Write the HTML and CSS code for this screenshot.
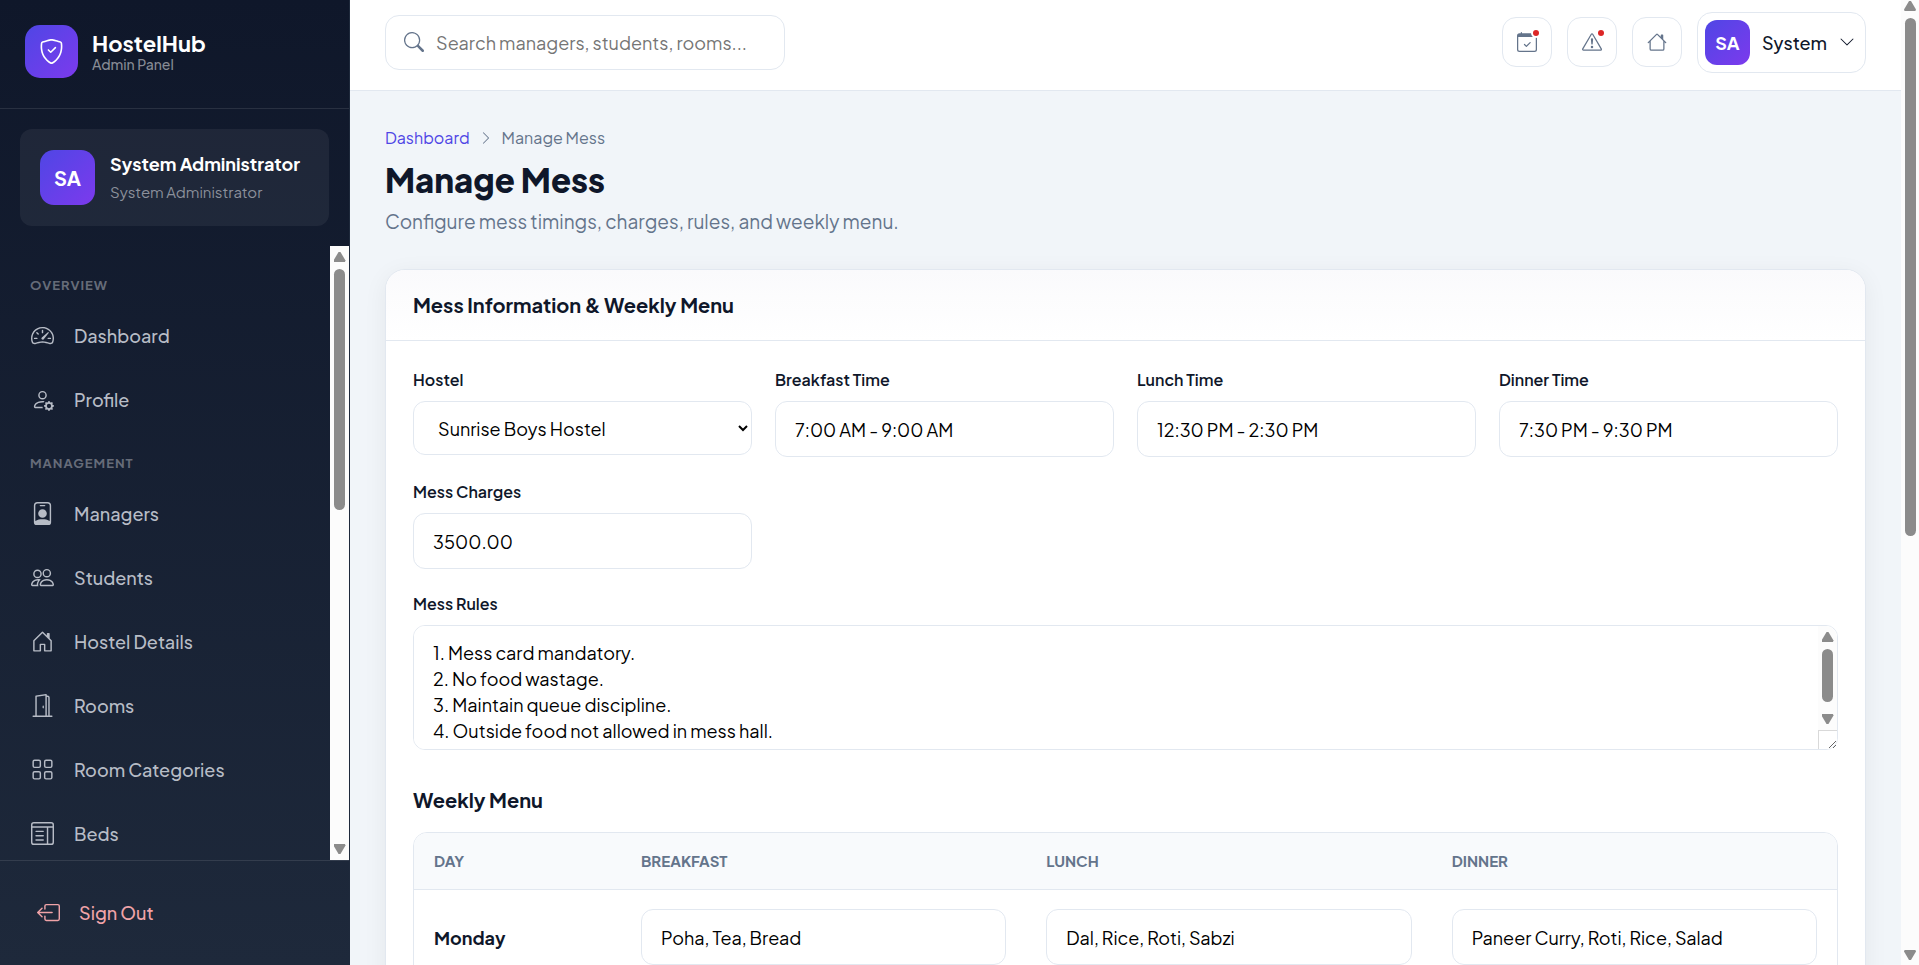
FILE: index.html
```html
<!DOCTYPE html>
<html lang="en">
<head>
  <meta charset="UTF-8">
  <meta name="viewport" content="width=device-width, initial-scale=1.0">
  <title>Manage Mess - HostelHub</title>
  <link rel="stylesheet" href="styles.css">
</head>
<body>
<div class="layout">

  <aside class="sidebar">
    <div class="brand">
      <div class="brand-logo">
        <svg class="icon" viewBox="0 0 16 16"><path d="M5.338 1.59a61 61 0 0 0-2.837.856.48.48 0 0 0-.328.39c-.554 4.157.726 7.19 2.253 9.188a10.7 10.7 0 0 0 2.287 2.233c.346.244.652.42.893.533q.18.085.293.118a1 1 0 0 0 .101.025 1 1 0 0 0 .1-.025q.114-.034.294-.118c.24-.113.547-.29.893-.533a10.7 10.7 0 0 0 2.287-2.233c1.527-1.997 2.807-5.031 2.253-9.188a.48.48 0 0 0-.328-.39c-.651-.213-1.75-.56-2.837-.855C9.552 1.29 8.531 1.067 8 1.067c-.53 0-1.552.223-2.662.524zM5.072.56C6.157.265 7.31 0 8 0s1.843.265 2.928.56c1.11.3 2.229.655 2.887.87a1.54 1.54 0 0 1 1.044 1.262c.596 4.477-.787 7.795-2.465 9.99a11.8 11.8 0 0 1-2.517 2.453 7 7 0 0 1-1.048.625c-.28.132-.581.24-.829.24s-.548-.108-.829-.24a7 7 0 0 1-1.048-.625 11.8 11.8 0 0 1-2.517-2.453C1.928 10.487.545 7.169 1.141 2.692A1.54 1.54 0 0 1 2.185 1.43 63 63 0 0 1 5.072.56"/><path d="M10.854 5.146a.5.5 0 0 1 0 .708l-3 3a.5.5 0 0 1-.708 0l-1.5-1.5a.5.5 0 1 1 .708-.708L7.5 7.793l2.646-2.647a.5.5 0 0 1 .708 0"/></svg>
      </div>
      <div class="brand-text">
        <strong>HostelHub</strong>
        <span>Admin Panel</span>
      </div>
    </div>

    <div class="user-card">
      <div class="avatar avatar-lg">SA</div>
      <div class="user-text">
        <strong>System Administrator</strong>
        <span>System Administrator</span>
      </div>
    </div>

    <div class="nav-wrap">
      <nav class="nav">
        <div class="nav-label">Overview</div>
        <a class="nav-link" href="#">
          <svg class="icon" viewBox="0 0 16 16"><path d="M8 4a.5.5 0 0 1 .5.5V6a.5.5 0 0 1-1 0V4.5A.5.5 0 0 1 8 4M3.732 5.732a.5.5 0 0 1 .707 0l.915.914a.5.5 0 1 1-.708.708l-.914-.915a.5.5 0 0 1 0-.707M2 10a.5.5 0 0 1 .5-.5h1.586a.5.5 0 0 1 0 1H2.5A.5.5 0 0 1 2 10m9.5 0a.5.5 0 0 1 .5-.5h1.5a.5.5 0 0 1 0 1H12a.5.5 0 0 1-.5-.5m.754-4.246a.39.39 0 0 0-.527-.02L7.547 9.31a.91.91 0 1 0 1.302 1.258l3.434-4.297a.39.39 0 0 0-.029-.518z"/><path fill-rule="evenodd" d="M0 10a8 8 0 1 1 15.547 2.661c-.442 1.253-1.845 1.602-2.932 1.25C11.309 13.488 9.475 13 8 13c-1.474 0-3.31.488-4.615.911-1.087.352-2.49.003-2.932-1.25A8 8 0 0 1 0 10m8-7a7 7 0 0 0-6.603 9.329c.203.575.923.876 1.68.63C4.397 12.533 6.358 12 8 12s3.604.532 4.923.96c.757.245 1.477-.056 1.68-.631A7 7 0 0 0 8 3"/></svg>
          Dashboard
        </a>
        <a class="nav-link" href="#">
          <svg class="icon" viewBox="0 0 16 16"><path d="M11 5a3 3 0 1 1-6 0 3 3 0 0 1 6 0M8 7a2 2 0 1 0 0-4 2 2 0 0 0 0 4m.256 7a4.5 4.5 0 0 1-.229-1.004H3c.001-.246.154-.986.832-1.664C4.484 10.68 5.711 10 8 10q.39 0 .74.025c.226-.341.496-.65.804-.918Q8.844 9.002 8 9c-5 0-6 3-6 4s1 1 1 1zm3.63-4.54c.18-.613 1.048-.613 1.229 0l.043.148a.64.64 0 0 0 .921.382l.136-.074c.561-.306 1.175.308.87.869l-.075.136a.64.64 0 0 0 .382.92l.149.045c.612.18.612 1.048 0 1.229l-.15.043a.64.64 0 0 0-.38.921l.074.136c.305.561-.309 1.175-.87.87l-.136-.075a.64.64 0 0 0-.92.382l-.045.149c-.18.612-1.048.612-1.229 0l-.043-.15a.64.64 0 0 0-.921-.38l-.136.074c-.561.305-1.175-.309-.87-.87l.075-.136a.64.64 0 0 0-.382-.92l-.148-.045c-.613-.18-.613-1.048 0-1.229l.148-.043a.64.64 0 0 0 .382-.921l-.074-.136c-.306-.561.308-1.175.869-.87l.136.075a.64.64 0 0 0 .92-.382zM14 12.5a1.5 1.5 0 1 0-3 0 1.5 1.5 0 0 0 3 0"/></svg>
          Profile
        </a>
        <div class="nav-label">Management</div>
        <a class="nav-link" href="#">
          <svg class="icon" viewBox="0 0 16 16"><path d="M6.5 2a.5.5 0 0 0 0 1h3a.5.5 0 0 0 0-1zM11 8a3 3 0 1 1-6 0 3 3 0 0 1 6 0"/><path d="M4.5 0A2.5 2.5 0 0 0 2 2.5V14a2 2 0 0 0 2 2h8a2 2 0 0 0 2-2V2.5A2.5 2.5 0 0 0 11.5 0zM3 2.5A1.5 1.5 0 0 1 4.5 1h7A1.5 1.5 0 0 1 13 2.5v10.795a4.2 4.2 0 0 0-.776-.492C11.392 12.387 10.063 12 8 12s-3.392.387-4.224.803a4.2 4.2 0 0 0-.776.492z"/></svg>
          Managers
        </a>
        <a class="nav-link" href="#">
          <svg class="icon" viewBox="0 0 16 16"><path d="M15 14s1 0 1-1-1-4-5-4-5 3-5 4 1 1 1 1zm-7.978-1L7 12.996c.001-.264.167-1.03.76-1.72C8.312 10.629 9.282 10 11 10c1.717 0 2.687.63 3.24 1.276.593.69.758 1.457.76 1.72l-.008.002-.014.002zM11 7a2 2 0 1 0 0-4 2 2 0 0 0 0 4m3-2a3 3 0 1 1-6 0 3 3 0 0 1 6 0M6.936 9.28a6 6 0 0 0-1.23-.247A7 7 0 0 0 5 9c-4 0-5 3-5 4q0 1 1 1h4.216A2.24 2.24 0 0 1 5 13c0-1.01.377-2.042 1.09-2.904.243-.294.526-.569.846-.816M4.92 10A5.5 5.5 0 0 0 4 13H1c0-.26.164-1.03.76-1.724.545-.636 1.492-1.256 3.16-1.275ZM1.5 5.5a3 3 0 1 1 6 0 3 3 0 0 1-6 0m3-2a2 2 0 1 0 0 4 2 2 0 0 0 0-4"/></svg>
          Students
        </a>
        <a class="nav-link" href="#">
          <svg class="icon" viewBox="0 0 16 16"><path d="M8.354 1.146a.5.5 0 0 0-.708 0l-6 6A.5.5 0 0 0 1.5 7.5v7a.5.5 0 0 0 .5.5h4.5a.5.5 0 0 0 .5-.5v-4h2v4a.5.5 0 0 0 .5.5H14a.5.5 0 0 0 .5-.5v-7a.5.5 0 0 0-.146-.354L13 5.793V2.5a.5.5 0 0 0-.5-.5h-1a.5.5 0 0 0-.5.5v1.293zM2.5 14V7.707l5.5-5.5 5.5 5.5V14H10v-4a.5.5 0 0 0-.5-.5h-3a.5.5 0 0 0-.5.5v4z"/></svg>
          Hostel Details
        </a>
        <a class="nav-link" href="#">
          <svg class="icon" viewBox="0 0 16 16"><path d="M8.5 10c-.276 0-.5-.448-.5-1s.224-1 .5-1 .5.448.5 1-.224 1-.5 1"/><path d="M10.828.122A.5.5 0 0 1 11 .5V1h.5A1.5 1.5 0 0 1 13 2.5V15h1.5a.5.5 0 0 1 0 1h-13a.5.5 0 0 1 0-1H3V1.5a.5.5 0 0 1 .43-.495l7-1a.5.5 0 0 1 .398.117M11.5 2H11v13h1V2.5a.5.5 0 0 0-.5-.5M4 1.934V15h6V1.077z"/></svg>
          Rooms
        </a>
        <a class="nav-link" href="#">
          <svg class="icon" viewBox="0 0 16 16"><path d="M1 2.5A1.5 1.5 0 0 1 2.5 1h3A1.5 1.5 0 0 1 7 2.5v3A1.5 1.5 0 0 1 5.5 7h-3A1.5 1.5 0 0 1 1 5.5zM2.5 2a.5.5 0 0 0-.5.5v3a.5.5 0 0 0 .5.5h3a.5.5 0 0 0 .5-.5v-3a.5.5 0 0 0-.5-.5zm6.5.5A1.5 1.5 0 0 1 10.5 1h3A1.5 1.5 0 0 1 15 2.5v3A1.5 1.5 0 0 1 13.5 7h-3A1.5 1.5 0 0 1 9 5.5zm1.5-.5a.5.5 0 0 0-.5.5v3a.5.5 0 0 0 .5.5h3a.5.5 0 0 0 .5-.5v-3a.5.5 0 0 0-.5-.5zM1 10.5A1.5 1.5 0 0 1 2.5 9h3A1.5 1.5 0 0 1 7 10.5v3A1.5 1.5 0 0 1 5.5 15h-3A1.5 1.5 0 0 1 1 13.5zm1.5-.5a.5.5 0 0 0-.5.5v3a.5.5 0 0 0 .5.5h3a.5.5 0 0 0 .5-.5v-3a.5.5 0 0 0-.5-.5zm6.5.5A1.5 1.5 0 0 1 10.5 9h3a1.5 1.5 0 0 1 1.5 1.5v3a1.5 1.5 0 0 1-1.5 1.5h-3A1.5 1.5 0 0 1 9 13.5zm1.5-.5a.5.5 0 0 0-.5.5v3a.5.5 0 0 0 .5.5h3a.5.5 0 0 0 .5-.5v-3a.5.5 0 0 0-.5-.5z"/></svg>
          Room Categories
        </a>
        <a class="nav-link" href="#">
          <svg class="icon" viewBox="0 0 16 16"><path d="M3 6.5a.5.5 0 0 1 .5-.5h5a.5.5 0 0 1 0 1h-5a.5.5 0 0 1-.5-.5m0 3a.5.5 0 0 1 .5-.5h5a.5.5 0 0 1 0 1h-5a.5.5 0 0 1-.5-.5m.5 2.500a.5.5 0 0 0 0 1h5a.5.5 0 0 0 0-1z"/><path d="M2 0a2 2 0 0 0-2 2v12a2 2 0 0 0 2 2h12a2 2 0 0 0 2-2V2a2 2 0 0 0-2-2zm12 1a1 1 0 0 1 1 1v1H1V2a1 1 0 0 1 1-1zm1 3v10a1 1 0 0 1-1 1h-2V4zm-4 0v11H2a1 1 0 0 1-1-1V4z"/></svg>
          Beds
        </a>
      </nav>
      <div class="scrollbar nav-scrollbar" aria-hidden="true">
        <span class="arrow-up"></span>
        <span class="thumb"></span>
        <span class="arrow-down"></span>
      </div>
    </div>

    <div class="sidebar-footer">
      <a class="signout" href="#">
        <svg class="icon" viewBox="0 0 16 16"><path fill-rule="evenodd" d="M6 12.5a.5.5 0 0 0 .5.5h8a.5.5 0 0 0 .5-.5v-9a.5.5 0 0 0-.5-.5h-8a.5.5 0 0 0-.5.5v2a.5.5 0 0 1-1 0v-2A1.5 1.5 0 0 1 6.5 2h8A1.5 1.5 0 0 1 16 3.5v9a1.5 1.5 0 0 1-1.5 1.5h-8A1.5 1.5 0 0 1 5 12.5v-2a.5.5 0 0 1 1 0z"/><path fill-rule="evenodd" d="M.146 8.354a.5.5 0 0 1 0-.708l3-3a.5.5 0 1 1 .708.708L1.707 7.5H10.5a.5.5 0 0 1 0 1H1.707l2.147 2.146a.5.5 0 0 1-.708.708z"/></svg>
        Sign Out
      </a>
    </div>
  </aside>

  <div class="main">
    <header class="topbar">
      <label class="search">
        <svg class="icon" viewBox="0 0 16 16"><path d="M11.742 10.344a6.5 6.5 0 1 0-1.397 1.398h-.001q.044.06.098.115l3.85 3.85a1 1 0 0 0 1.415-1.414l-3.85-3.85a1 1 0 0 0-.115-.1zM12 6.5a5.5 5.5 0 1 1-11 0 5.5 5.5 0 0 1 11 0"/></svg>
        <input type="search" placeholder="Search managers, students, rooms..." aria-label="Search">
      </label>
      <div class="topbar-actions">
        <button class="icon-btn" type="button" aria-label="Bookings">
          <svg class="icon" viewBox="0 0 16 16"><path d="M10.854 8.146a.5.5 0 0 1 0 .708l-3 3a.5.5 0 0 1-.708 0l-1.5-1.5a.5.5 0 0 1 .708-.708L7.5 10.793l2.646-2.647a.5.5 0 0 1 .708 0"/><path d="M3.5 0a.5.5 0 0 1 .5.5V1h8V.5a.5.5 0 0 1 1 0V1h1a2 2 0 0 1 2 2v11a2 2 0 0 1-2 2H2a2 2 0 0 1-2-2V3a2 2 0 0 1 2-2h1V.5a.5.5 0 0 1 .5-.5M1 4v10a1 1 0 0 0 1 1h12a1 1 0 0 0 1-1V4z"/></svg>
          <span class="dot"></span>
        </button>
        <button class="icon-btn" type="button" aria-label="Complaints">
          <svg class="icon" viewBox="0 0 16 16"><path d="M7.938 2.016A.13.13 0 0 1 8.002 2a.13.13 0 0 1 .063.016.15.15 0 0 1 .054.057l6.857 11.667c.036.06.035.124.002.183a.2.2 0 0 1-.054.06.1.1 0 0 1-.066.017H1.146a.1.1 0 0 1-.066-.017.2.2 0 0 1-.054-.06.18.18 0 0 1 .002-.183L7.884 2.073a.15.15 0 0 1 .054-.057m1.044-.45a1.13 1.13 0 0 0-1.96 0L.165 13.233c-.457.778.091 1.767.98 1.767h13.713c.889 0 1.438-.99.98-1.767z"/><path d="M7.002 12a1 1 0 1 1 2 0 1 1 0 0 1-2 0M7.1 5.995a.905.905 0 1 1 1.8 0l-.35 3.507a.552.552 0 0 1-1.1 0z"/></svg>
          <span class="dot"></span>
        </button>
        <button class="icon-btn" type="button" aria-label="Home">
          <svg class="icon" viewBox="0 0 16 16"><path d="M8.707 1.5a1 1 0 0 0-1.414 0L.646 8.146a.5.5 0 0 0 .708.708L2 8.207V13.5A1.5 1.5 0 0 0 3.5 15h9a1.5 1.5 0 0 0 1.5-1.5V8.207l.646.647a.5.5 0 0 0 .708-.708L13 5.793V2.5a.5.5 0 0 0-.5-.5h-1a.5.5 0 0 0-.5.5v1.293zM13 7.207V13.5a.5.5 0 0 1-.5.5h-9a.5.5 0 0 1-.5-.5V7.207l5-5z"/></svg>
        </button>
        <button class="user-menu" type="button">
          <span class="avatar">SA</span>
          System
          <svg class="icon" viewBox="0 0 16 16"><path fill-rule="evenodd" d="M1.646 4.646a.5.5 0 0 1 .708 0L8 10.293l5.646-5.647a.5.5 0 0 1 .708.708l-6 6a.5.5 0 0 1-.708 0l-6-6a.5.5 0 0 1 0-.708"/></svg>
        </button>
      </div>
    </header>

    <main class="content">
      <nav class="breadcrumb">
        <a href="#">Dashboard</a>
        <svg class="icon" viewBox="0 0 16 16"><path fill-rule="evenodd" d="M4.646 1.646a.5.5 0 0 1 .708 0l6 6a.5.5 0 0 1 0 .708l-6 6a.5.5 0 0 1-.708-.708L10.293 8 4.646 2.354a.5.5 0 0 1 0-.708"/></svg>
        <span>Manage Mess</span>
      </nav>
      <h1>Manage Mess</h1>
      <p class="subtitle">Configure mess timings, charges, rules, and weekly menu.</p>

      <section class="card">
        <div class="card-header">
          <h2>Mess Information &amp; Weekly Menu</h2>
        </div>
        <form class="card-body">
          <div class="form-grid">
            <div class="field">
              <label for="hostel">Hostel</label>
              <select id="hostel" class="control">
                <option>Sunrise Boys Hostel</option>
              </select>
            </div>
            <div class="field">
              <label for="breakfast">Breakfast Time</label>
              <input id="breakfast" class="control" type="text" value="7:00 AM - 9:00 AM">
            </div>
            <div class="field">
              <label for="lunch">Lunch Time</label>
              <input id="lunch" class="control" type="text" value="12:30 PM - 2:30 PM">
            </div>
            <div class="field">
              <label for="dinner">Dinner Time</label>
              <input id="dinner" class="control" type="text" value="7:30 PM - 9:30 PM">
            </div>
            <div class="field">
              <label for="charges">Mess Charges</label>
              <input id="charges" class="control" type="text" value="3500.00">
            </div>
            <div class="field field-full">
              <label for="rules">Mess Rules</label>
              <div class="textarea-wrap">
                <textarea id="rules" class="control" rows="4">1. Mess card mandatory.
2. No food wastage.
3. Maintain queue discipline.
4. Outside food not allowed in mess hall.</textarea>
                <div class="scrollbar textarea-scrollbar" aria-hidden="true">
                  <span class="arrow-up"></span>
                  <span class="thumb"></span>
                  <span class="arrow-down"></span>
                </div>
                <span class="resize-corner"></span>
              </div>
            </div>
          </div>

          <h3>Weekly Menu</h3>
          <div class="table-wrap">
            <table class="menu-table">
              <thead>
                <tr><th class="col-day">Day</th><th>Breakfast</th><th>Lunch</th><th>Dinner</th></tr>
              </thead>
              <tbody>
                <tr>
                  <td class="day">Monday</td>
                  <td><input class="control" type="text" aria-label="Monday breakfast" value="Poha, Tea, Bread"></td>
                  <td><input class="control" type="text" aria-label="Monday lunch" value="Dal, Rice, Roti, Sabzi"></td>
                  <td><input class="control" type="text" aria-label="Monday dinner" value="Paneer Curry, Roti, Rice, Salad"></td>
                </tr>
              </tbody>
            </table>
          </div>
        </form>
      </section>
    </main>
  </div>

  <div class="scrollbar page-scrollbar" aria-hidden="true">
    <span class="arrow-up"></span>
    <span class="thumb"></span>
    <span class="arrow-down"></span>
  </div>

</div>
</body>
</html>
```
FILE: styles.css
```css
* {
  box-sizing: border-box;
}

body {
  margin: 0;
  background: #f1f5f9;
  color: #0f172a;
  font-family: "Plus Jakarta Sans", Inter, sans-serif;
  font-size: 18px;
}

input, select, textarea, button {
  font-family: inherit;
  font-size: inherit;
}

h1, h2, h3, p {
  margin: 0;
}

a {
  text-decoration: none;
}

.icon {
  width: 20px;
  height: 20px;
  fill: currentColor;
  flex-shrink: 0;
}

.layout {
  display: flex;
  align-items: flex-start;
}

/* scrollbars */
.scrollbar {
  display: flex;
  flex-direction: column;
  align-items: center;
  gap: 7px;
  width: 19px;
  padding: 6px 0;
  flex-shrink: 0;
  background: #fcfcfc;
}
.arrow-up,
.arrow-down {
  width: 12px;
  height: 10px;
  flex-shrink: 0;
  background: #8b8b8b;
}
.arrow-up {
  clip-path: polygon(42% 0, 58% 0, 100% 85%, 95% 100%, 5% 100%, 0 85%);
}
.arrow-down {
  margin-top: auto;
  clip-path: polygon(5% 0, 95% 0, 100% 15%, 58% 100%, 42% 100%, 0 15%);
}
.thumb {
  width: 11px;
  border-radius: 6px;
  background: #8b8b8b;
}
.nav-scrollbar .thumb {
  height: 40%;
}
.page-scrollbar {
  position: sticky;
  top: 0;
  height: 100vh;
  width: 18px;
  padding: 1px 0 5px;
}
.page-scrollbar .thumb {
  height: 54%;
}
.textarea-scrollbar {
  position: absolute;
  top: 1px;
  right: 1px;
  bottom: 20px;
  border-top-right-radius: 12px;
}
.textarea-scrollbar .thumb {
  height: 58%;
}

/* sidebar */
.sidebar {
  position: sticky;
  top: 0;
  display: flex;
  flex-direction: column;
  width: 350px;
  height: 100vh;
  flex-shrink: 0;
  background: linear-gradient(180deg, #0f172a 0%, #1e293b 100%);
  border-right: 1px solid #1e293b;
  color: #fff;
}

.brand {
  display: flex;
  align-items: center;
  gap: 14px;
  padding: 25px 25px 30px;
  border-bottom: 1px solid rgba(255, 255, 255, 0.1);
}

.brand-logo {
  display: flex;
  align-items: center;
  justify-content: center;
  width: 53px;
  height: 53px;
  border-radius: 15px;
  background: linear-gradient(135deg, #4f46e5, #7c3aed);
}
.brand-logo .icon {
  width: 25px;
  height: 25px;
}

.brand-text,
.user-text {
  display: flex;
  flex-direction: column;
}
.brand-text strong {
  font-size: 22px;
  line-height: 24px;
}
.brand-text span {
  color: #878b95;
  font-size: 14px;
  font-weight: 500;
  line-height: 18px;
}

.user-card {
  display: flex;
  align-items: center;
  gap: 15px;
  margin: 20px;
  padding: 20px;
  border-radius: 12px;
  background: rgba(255, 255, 255, 0.06);
}
.user-text strong {
  font-size: 18px;
  line-height: 29px;
}
.user-text span {
  color: #8b909b;
  font-size: 15px;
  line-height: 28px;
}

.avatar {
  display: flex;
  align-items: center;
  justify-content: center;
  width: 45px;
  height: 45px;
  border-radius: 12px;
  background: linear-gradient(135deg, #4f46e5, #7c3aed);
  color: #fff;
  font-size: 18px;
  font-weight: 700;
}
.avatar-lg {
  width: 55px;
  height: 55px;
  border-radius: 14px;
  font-size: 20px;
}

.nav-wrap {
  display: flex;
  flex: 1;
  min-height: 0;
}
.nav {
  flex: 1;
  overflow: hidden;
  padding: 10px 15px 0;
}
.nav-label {
  padding: 20px 15px 12px;
  color: #666c79;
  font-size: 13px;
  font-weight: 700;
  letter-spacing: 1px;
  line-height: 18px;
  text-transform: uppercase;
}
.nav-link {
  display: flex;
  align-items: center;
  gap: 20px;
  height: 59px;
  margin-bottom: 5px;
  padding: 0 16px;
  color: #b7bcc6;
  font-size: 18px;
  font-weight: 500;
}
.nav-link .icon,
.signout .icon {
  width: 23px;
  height: 23px;
}

.sidebar-footer {
  padding: 20px 20px 22px;
  border-top: 1px solid rgba(255, 255, 255, 0.1);
}
.signout {
  display: flex;
  align-items: center;
  gap: 19px;
  height: 62px;
  padding: 0 17px;
  color: #f0a3a8;
  font-weight: 500;
}

/* top bar */
.main {
  flex: 1;
  min-width: 0;
}
.topbar {
  display: flex;
  align-items: center;
  justify-content: space-between;
  height: 91px;
  padding: 0 35px 6px;
  border-bottom: 1px solid #e2e8f0;
  background: #fff;
}
.search {
  display: flex;
  align-items: center;
  gap: 12px;
  width: 400px;
  height: 55px;
  padding: 0 18px;
  border: 1px solid #e2e8f0;
  border-radius: 14px;
  color: #64748b;
}
.search input {
  flex: 1;
  min-width: 0;
  padding: 0;
  border: 0;
  outline: 0;
  background: none;
}
.search input::placeholder {
  color: #757575;
}

.topbar-actions {
  display: flex;
  align-items: center;
  gap: 15px;
}
.icon-btn {
  position: relative;
  display: flex;
  align-items: center;
  justify-content: center;
  width: 50px;
  height: 50px;
  padding: 0;
  border: 1px solid #e2e8f0;
  border-radius: 14px;
  background: #fff;
  color: #64748b;
}
.dot {
  position: absolute;
  top: 12px;
  right: 12px;
  width: 6px;
  height: 6px;
  border-radius: 50%;
  background: #dc2626;
  box-shadow: 0 0 0 2px #fff;
}
.user-menu {
  display: flex;
  align-items: center;
  gap: 12px;
  height: 61px;
  padding: 0 10px 0 7px;
  border: 1px solid #e2e8f0;
  border-radius: 15px;
  background: #fff;
  color: #0f172a;
  font-weight: 500;
}
.user-menu .icon {
  width: 16px;
  height: 16px;
}

/* page */
.content {
  padding: 35px;
}
.breadcrumb {
  display: flex;
  align-items: center;
  gap: 9px;
  color: #64748b;
  font-size: 16px;
  line-height: 24px;
}
.breadcrumb a {
  color: #4f46e5;
}
.breadcrumb .icon {
  width: 14px;
  height: 14px;
}
h1 {
  padding: 8px 0;
  font-size: 33px;
  font-weight: 800;
  line-height: 43px;
}
.subtitle {
  color: #64748b;
  font-size: 19px;
  line-height: 24px;
}

.card {
  margin-top: 36px;
  overflow: hidden;
  border: 1px solid #e2e8f0;
  border-radius: 20px;
  background: #fff;
  box-shadow: 0 5px 25px rgba(15, 23, 42, 0.06);
}
.card-header {
  padding: 22px 27px;
  border-bottom: 1px solid #e2e8f0;
  background: linear-gradient(180deg, #fafafc, #fff);
}
.card-header h2,
h3 {
  font-size: 20px;
  font-weight: 700;
  line-height: 26px;
}
.card-body {
  padding: 27px;
}

.form-grid {
  display: grid;
  grid-template-columns: repeat(4, 1fr);
  gap: 23px;
}
.field {
  display: flex;
  flex-direction: column;
  gap: 9px;
}
.field-full {
  grid-column: 1 / -1;
}
.field label {
  font-size: 16px;
  font-weight: 600;
  line-height: 24px;
}
.control {
  width: 100%;
  height: 56px;
  padding: 0 19px;
  border: 1px solid #e2e8f0;
  border-radius: 12px;
  background: #fff;
  color: #000;
}
select.control {
  height: 54px;
  padding: 0 0 0 20px;
}
.textarea-wrap {
  position: relative;
}
textarea.control {
  display: block;
  height: 125px;
  padding: 14px 19px;
  line-height: 26px;
  overflow-y: scroll;
  resize: vertical;
}
.resize-corner {
  position: absolute;
  right: 1px;
  bottom: 1px;
  width: 19px;
  height: 19px;
  border-top: 1px solid #d9d9d9;
  border-left: 1px solid #d9d9d9;
  pointer-events: none;
}

h3 {
  padding: 37px 0 19px;
}
.table-wrap {
  overflow: hidden;
  border: 1px solid #e2e8f0;
  border-radius: 14px;
}
.menu-table {
  width: 100%;
  border-collapse: collapse;
  table-layout: fixed;
}
.menu-table th {
  padding: 18px 20px;
  border-bottom: 1px solid #e2e8f0;
  background: #f8fafc;
  color: #64748b;
  font-size: 15px;
  font-weight: 700;
  line-height: 20px;
  text-align: left;
  text-transform: uppercase;
}
.menu-table .col-day {
  width: 207px;
}
.menu-table td {
  padding: 19px 20px;
}
.menu-table .day {
  font-weight: 700;
}
```
